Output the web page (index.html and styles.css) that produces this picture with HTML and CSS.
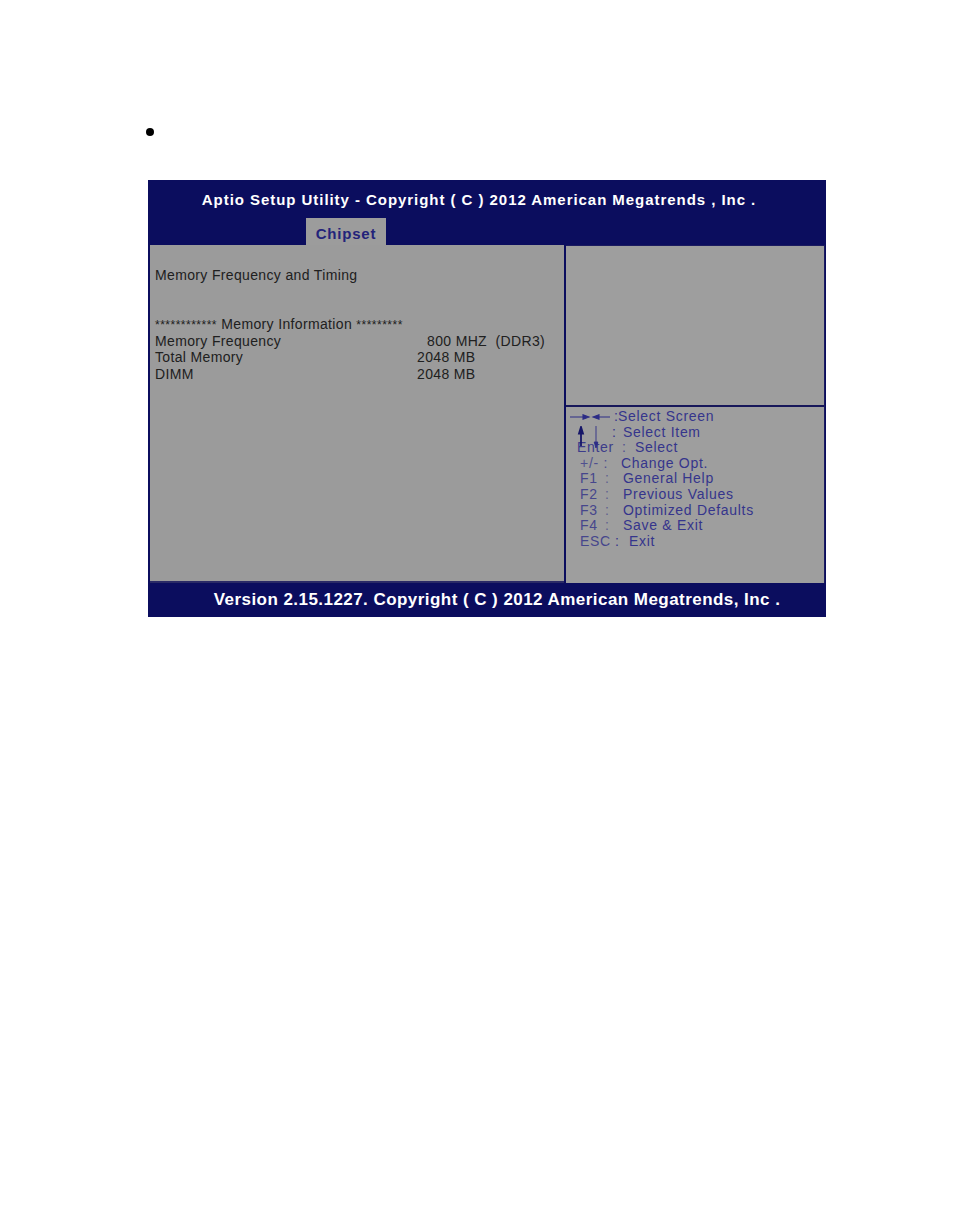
FILE: index.html
```html
<!DOCTYPE html>
<html>
<head>
<meta charset="utf-8">
<link rel="stylesheet" href="styles.css">
</head>
<body>
<div class="page">
  <div class="bullet-row"><span class="bullet"></span></div>
  <div class="bios">
    <div class="header">
      <div class="title">Aptio Setup Utility - Copyright ( C ) 2012 American Megatrends , Inc .</div>
      <div class="tabs"><div class="tab">Chipset</div></div>
    </div>
    <div class="main">
      <div class="left">
        <div class="line heading">Memory Frequency and Timing</div>
        <div class="line info"><span class="stars">************</span> Memory Information <span class="stars">*********</span></div>
        <div class="line row"><span class="k">Memory Frequency</span><span class="v v1">800 MHZ&nbsp; (DDR3)</span></div>
        <div class="line row"><span class="k">Total Memory</span><span class="v">2048 MB</span></div>
        <div class="line row"><span class="k">DIMM</span><span class="v">2048 MB</span></div>
      </div>
      <div class="right">
        <div class="help-top"></div>
        <div class="help">
          <div class="h"><svg class="lr" width="44" height="10" viewBox="0 0 44 10"><path d="M0 5H15M13 2.8L19 5L13 7.2Z M23 5H40M29 2.8L23 5L29 7.2Z" stroke="#2c2c86" stroke-width="1.1" fill="#2c2c86"/></svg><span class="s-screen">:</span><span>Select Screen</span></div>
          <div class="h h-item"><span class="s-item">:</span><span>Select Item</span>
            <svg class="ud" width="22" height="26" viewBox="0 0 22 26"><path d="M4 20V3M2 7.5L4 1L6 7.5Z" stroke="#161668" stroke-width="1.8" fill="#161668"/><path d="M19 0V19M17.2 16L19 22L20.8 16Z" stroke="#2c2c86" stroke-width="0.9" fill="#2c2c86"/></svg>
          </div>
          <div class="h"><span class="k-enter">Enter</span><span class="s-enter">:</span><span>Select</span></div>
          <div class="h"><span class="k-pm">+/- :</span><span>Change Opt.</span></div>
          <div class="h"><span class="k-f">F1</span><span class="s-f">:</span><span>General Help</span></div>
          <div class="h"><span class="k-f">F2</span><span class="s-f">:</span><span>Previous Values</span></div>
          <div class="h"><span class="k-f">F3</span><span class="s-f">:</span><span>Optimized Defaults</span></div>
          <div class="h"><span class="k-f">F4</span><span class="s-f">:</span><span>Save &amp; Exit</span></div>
          <div class="h"><span class="k-esc">ESC</span><span class="s-esc">:</span><span>Exit</span></div>
        </div>
      </div>
    </div>
    <div class="footer">Version 2.15.1227. Copyright ( C ) 2012 American Megatrends, Inc .</div>
  </div>
</div>
</body>
</html>
```
FILE: styles.css
```css
html, body {
  margin: 0;
  padding: 0;
  background: #ffffff;
}
.page {
  width: 954px;
  height: 1232px;
  font-family: "Liberation Sans", Arial, sans-serif;
  padding-top: 128px;
  box-sizing: border-box;
}
.bullet-row {
  height: 52px;
  padding-left: 146px;
}
.bullet {
  display: block;
  width: 8px;
  height: 8px;
  border-radius: 50%;
  background: #000;
}
.bios {
  margin-left: 148px;
  width: 678px;
  height: 437px;
  display: flex;
  flex-direction: column;
  background: #0b0d5e;
}
.header {
  height: 65px;
  display: flex;
  flex-direction: column;
  justify-content: space-between;
}
.title {
  color: #ffffff;
  font-weight: bold;
  font-size: 15px;
  letter-spacing: 0.95px;
  text-align: center;
  padding-top: 11px;
  padding-right: 16px;
}
.tabs {
  display: flex;
  padding-left: 158px;
}
.tab {
  width: 80px;
  height: 27px;
  background: #9c9c9c;
  color: #23237a;
  font-weight: bold;
  font-size: 15px;
  letter-spacing: 0.8px;
  text-align: center;
  line-height: 32px;
}
.main {
  height: 338px;
  display: flex;
  gap: 2px;
  padding-left: 2px;
  padding-right: 1px;
}
.left {
  width: 414px;
  background: #9b9b9b;
  color: #202020;
  font-size: 14px;
  letter-spacing: 0.35px;
  padding: 22px 0 0 5px;
  box-sizing: border-box;
  border-bottom: 2px solid #2a2a66;
}
.line {
  height: 16.4px;
  line-height: 16.4px;
  white-space: nowrap;
}
.heading {
  margin-bottom: 33px;
}
.stars {
  font-size: 12px;
  letter-spacing: 0.5px;
}
.row {
  display: flex;
}
.k {
  width: 262px;
}
.v1 {
  padding-left: 10px;
}
.right {
  flex: 1;
  display: flex;
  flex-direction: column;
  border-top: 1px solid #1b1b60;
  border-right: 1px solid #1b1b60;
}
.help-top {
  height: 159px;
  background: #9e9e9e;
  border-bottom: 2px solid #17175a;
}
.help {
  flex: 1;
  background: #9e9e9e;
  color: #35358c;
  font-size: 14px;
  letter-spacing: 0.7px;
  padding-top: 2px;
}
.h {
  height: 15.6px;
  line-height: 15.6px;
  white-space: nowrap;
  display: flex;
  align-items: center;
}
.lr {
  flex: none;
  margin-left: 4px;
}
.s-screen {
  width: 4px;
  letter-spacing: 0;
}
.h-item {
  position: relative;
  padding-left: 46px;
}
.s-item {
  width: 11px;
}
.ud {
  position: absolute;
  left: 11px;
  top: 1px;
}
.k-enter {
  margin-left: 11px;
  width: 45px;
  color: #3c3c8a;
}
.s-enter {
  width: 13px;
  color: #505090;
}
.k-pm {
  margin-left: 14px;
  width: 41px;
  color: #50508f;
}
.k-f {
  margin-left: 14px;
  width: 25px;
  color: #46468c;
}
.s-f {
  width: 18px;
  color: #60608f;
}
.k-esc {
  margin-left: 14px;
  width: 35px;
  color: #46468c;
}
.s-esc {
  width: 14px;
}
.footer {
  height: 34px;
  color: #ffffff;
  font-weight: bold;
  font-size: 17px;
  text-align: center;
  line-height: 33px;
  letter-spacing: 0.45px;
  padding-left: 20px;
}
```
